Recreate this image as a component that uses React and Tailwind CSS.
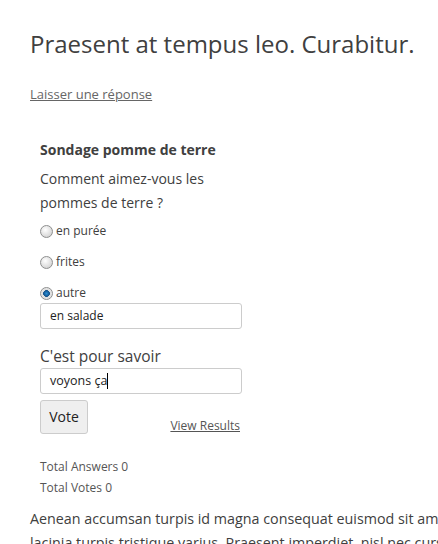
import React from 'react';

const Radio = ({ checked }) => (
  <span
    className={
      'inline-block w-[13px] h-[13px] rounded-full border border-[#8e8f8f] shrink-0 ' +
      (checked
        ? 'bg-[radial-gradient(circle,#2b8fd6_0,#11508a_40%,#dcdcdc_45%,#f4f4f4_100%)]'
        : 'bg-[radial-gradient(circle_at_40%_35%,#ffffff_0,#dedede_60%,#c7c7c7_100%)]')
    }
  />
);

const options = [
  { label: 'en purée', checked: false },
  { label: 'frites', checked: false },
  { label: 'autre', checked: true },
];

export default function App() {
  return (
    <div className="bg-white w-[438px] h-[544px] overflow-hidden text-[#404040] font-['Open_Sans',sans-serif]">
      <div className="pl-[30px] pt-[28px]">
        <h1 className="text-[24px] leading-[32px] font-normal">
          Praesent at tempus leo. Curabitur.
        </h1>
        <a href="#" className="block mt-[24px] text-[13px] leading-[20px] text-[#666] underline">
          Laisser une réponse
        </a>

        {/* Poll */}
        <div className="pl-[10px] pt-[36px] w-[222px]">
          <h3 className="text-[14px] leading-[20px] font-bold">Sondage pomme de terre</h3>
          <p className="mt-[7px] text-[14px] leading-[24px]">
            Comment aimez-vous les pommes de terre ?
          </p>
          <div className="mt-[7px] flex flex-col gap-[13px]">
            {options.map((o) => (
              <label key={o.label} className="flex items-center gap-[3px] text-[12px] leading-[18px]">
                <Radio checked={o.checked} />
                {o.label}
              </label>
            ))}
          </div>
          <div className="mt-[1px] w-[202px] h-[26px] border border-[#ccc] rounded-[3px] px-[9px] text-[12px] leading-[24px] text-[#222]">
            en salade
          </div>

          <p className="mt-[15px] text-[15.5px] leading-[24px]">C'est pour savoir</p>
          <div className="w-[202px] h-[26px] border border-[#ccc] rounded-[3px] px-[9px] text-[12.5px] leading-[24px] text-[#222] flex items-center">
            voyons ça<span className="inline-block w-px h-[16px] bg-black" />
          </div>

          <div className="mt-[6px] flex items-end justify-between w-[202px]">
            <button className="w-[48px] h-[34px] bg-[#efefef] border border-[#ccc] rounded-[3px] text-[14px] text-[#222] pb-[1px]">
              Vote
            </button>
            <a href="#" className="text-[12px] leading-[16px] text-[#555] underline mr-[2px]">
              View Results
            </a>
          </div>

          <div className="mt-[22px] text-[12px] leading-[21px] text-[#555]">
            <div>Total Answers 0</div>
            <div>Total Votes 0</div>
          </div>
        </div>

        <div className="mt-[9px] text-[14.3px] leading-[24px] whitespace-nowrap">
          <div>Aenean accumsan turpis id magna consequat euismod sit amet</div>
          <div>lacinia turpis tristique varius. Praesent imperdiet, nisl nec cursus</div>
        </div>
      </div>
    </div>
  );
}
